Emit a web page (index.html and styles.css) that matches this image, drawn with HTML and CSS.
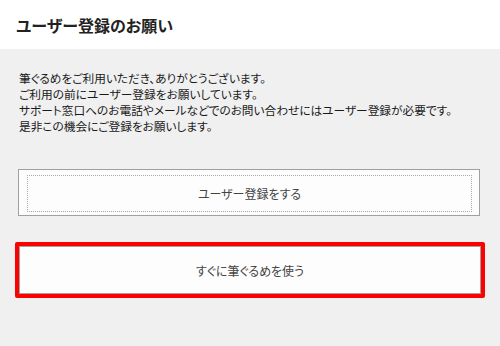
FILE: index.html
```html
<!doctype html>
<html lang="ja">
	<head>
		<meta charset="UTF-8">
		<title>ユーザー登録のお願い</title>
		<link rel="stylesheet" href="styles.css">
	</head>
	<body>
		<div class="cabecalho">
			<h1 class="titulo">ユーザー登録のお願い</h1>
		</div>
		<div class="conteudo">
			<p class="texto">
				筆ぐるめをご利用いただき、ありがとうございます。<br>
				ご利用の前にユーザー登録をお願いしています。<br>
				サポート窓口へのお電話やメールなどでのお問い合わせにはユーザー登録が必要です。<br>
				是非この機会にご登録をお願いします。
			</p>
			<button class="botao botao1"><span class="foco">ユーザー登録をする</span></button>
			<div class="destaque">
				<button class="botao">すぐに筆ぐるめを使う</button>
			</div>
		</div>
	</body>
</html>
```
FILE: styles.css
```css
body{
	margin: 0;
	background: #f0f0f0;
	font-family: "Noto Sans CJK JP", "Noto Sans", sans-serif;
	color: #1a1a1a;
	height: 346px;
}

.cabecalho{
	background: #ffffff;
	height: 49px;
	padding-left: 16px;
	display: flex;
	align-items: center;
}

.titulo{
	margin: 0;
	font-size: 16px;
	font-weight: bold;
	color: #222;
	font-feature-settings: "palt";
}

.conteudo{
	padding: 21px 0 0 19px;
}

.texto{
	margin: 0;
	font-size: 11.7px;
	line-height: 16px;
	font-feature-settings: "palt";
}

.botao{
	display: block;
	box-sizing: border-box;
	width: 462px;
	height: 48px;
	background: #fdfdfd;
	border: 1px solid #a0a0a0;
	font-family: "Noto Sans CJK JP", "Noto Sans", sans-serif;
	font-size: 12px;
	color: #444;
	font-feature-settings: "palt";
	padding: 0;
}

.botao1{
	margin: 35px 0 0 -1px;
	height: 47px;
	padding: 5px 7px 3px 8px;
}

.foco{
	display: flex;
	align-items: center;
	justify-content: center;
	height: 100%;
	border: 1px dotted #a8a8a8;
	box-sizing: border-box;
}

.destaque{
	margin: 26px 0 0 -4px;
	width: 462px;
	border: 4px solid #ff0000;
	border-radius: 2px;
}
```
